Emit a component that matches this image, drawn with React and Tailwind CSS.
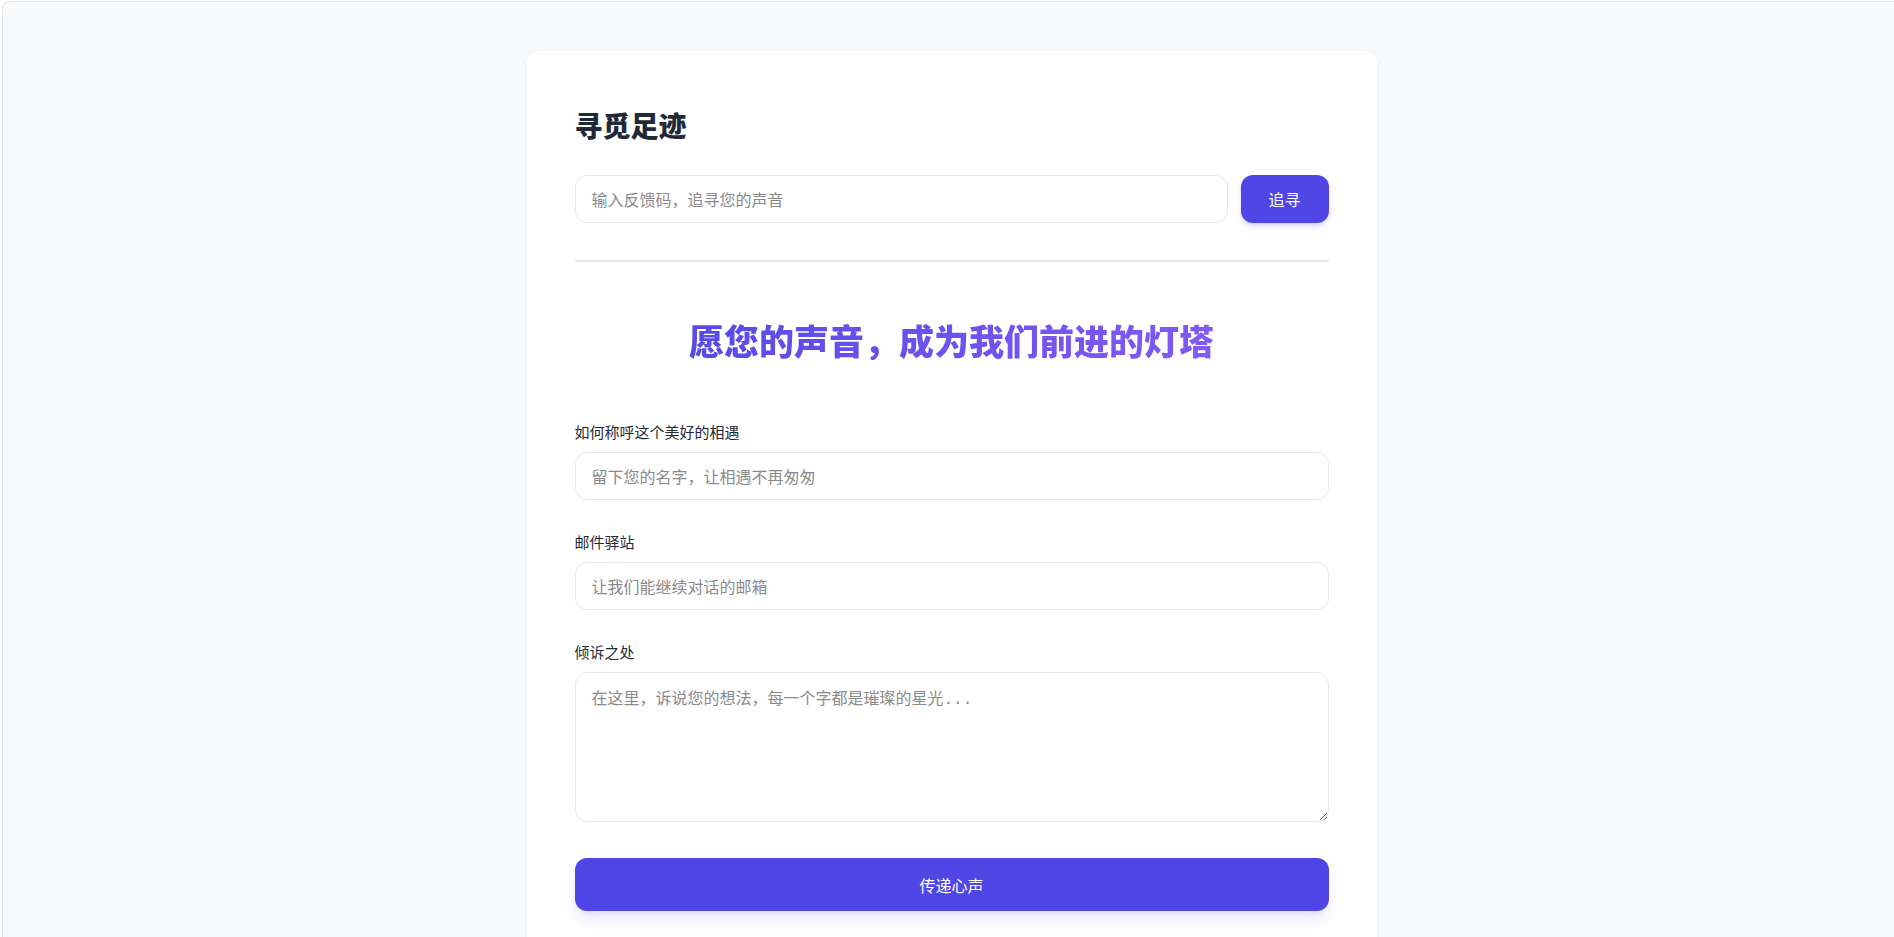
const fields = [
  { label: '如何称呼这个美好的相遇', placeholder: '留下您的名字，让相遇不再匆匆', type: 'text' },
  { label: '邮件驿站', placeholder: '让我们能继续对话的邮箱', type: 'email' },
];

export default function App() {
  return (
    <div className="overflow-hidden font-['Noto_Sans_CJK_SC','Noto_Sans',sans-serif]">
      <div className="mt-px ml-[2px] min-h-[937px] rounded-tl-lg border-l border-t border-gray-200 bg-gray-50 pl-[6px] pt-[49px]">
        <div className="mx-auto w-[850px] rounded-xl bg-white px-12 pb-12 pt-14 shadow-[0_2px_10px_rgba(0,0,0,0.05)]">
          <h1 className="text-[28px] font-black leading-9 text-[#1f2937]">寻觅足迹</h1>

          <div className="mt-8 flex gap-[13px]">
            <input
              type="text"
              placeholder="输入反馈码，追寻您的声音"
              className="h-12 flex-1 rounded-xl border border-[#e5e7eb] px-4 text-base text-gray-800 outline-none placeholder:text-[#8a8a8a]"
            />
            <button className="h-12 w-[88px] rounded-xl bg-[#4f46e5] text-base text-white shadow-md shadow-[#4f46e5]/20">
              追寻
            </button>
          </div>

          <div className="mt-[37px] h-[2px] bg-[#e5e7eb]" />

          <h2 className="mt-[58px] bg-gradient-to-r from-[#4f46e5] to-[#8b5cf6] bg-clip-text text-center text-[35px] font-black leading-10 text-transparent">
            愿您的声音，成为我们前进的灯塔
          </h2>

          <form className="mt-[62px] flex flex-col" onSubmit={(e) => e.preventDefault()}>
            {fields.map((f) => (
              <div key={f.label} className="mb-8">
                <label className="mb-2.5 block text-[15px] leading-5 text-[#1f2937]">{f.label}</label>
                <input
                  type={f.type}
                  placeholder={f.placeholder}
                  className="h-12 w-full rounded-xl border border-[#e5e7eb] px-4 text-base text-gray-800 outline-none placeholder:text-[#8a8a8a]"
                />
              </div>
            ))}
            <div>
              <label className="mb-2.5 block text-[15px] leading-5 text-[#1f2937]">倾诉之处</label>
              <textarea
                placeholder="在这里，诉说您的想法，每一个字都是璀璨的星光..."
                className="block h-[150px] w-full rounded-xl border border-[#e5e7eb] px-4 py-[15px] font-['Liberation_Mono','Noto_Sans_CJK_SC',monospace] text-[16px] leading-6 text-gray-800 outline-none placeholder:text-[#8a8a8a]"
              />
            </div>
            <button
              type="submit"
              className="mt-9 h-[53px] w-full rounded-xl bg-[#4f46e5] text-base text-white shadow-lg shadow-[#4f46e5]/15"
            >
              传递心声
            </button>
          </form>
        </div>
      </div>
    </div>
  );
}
